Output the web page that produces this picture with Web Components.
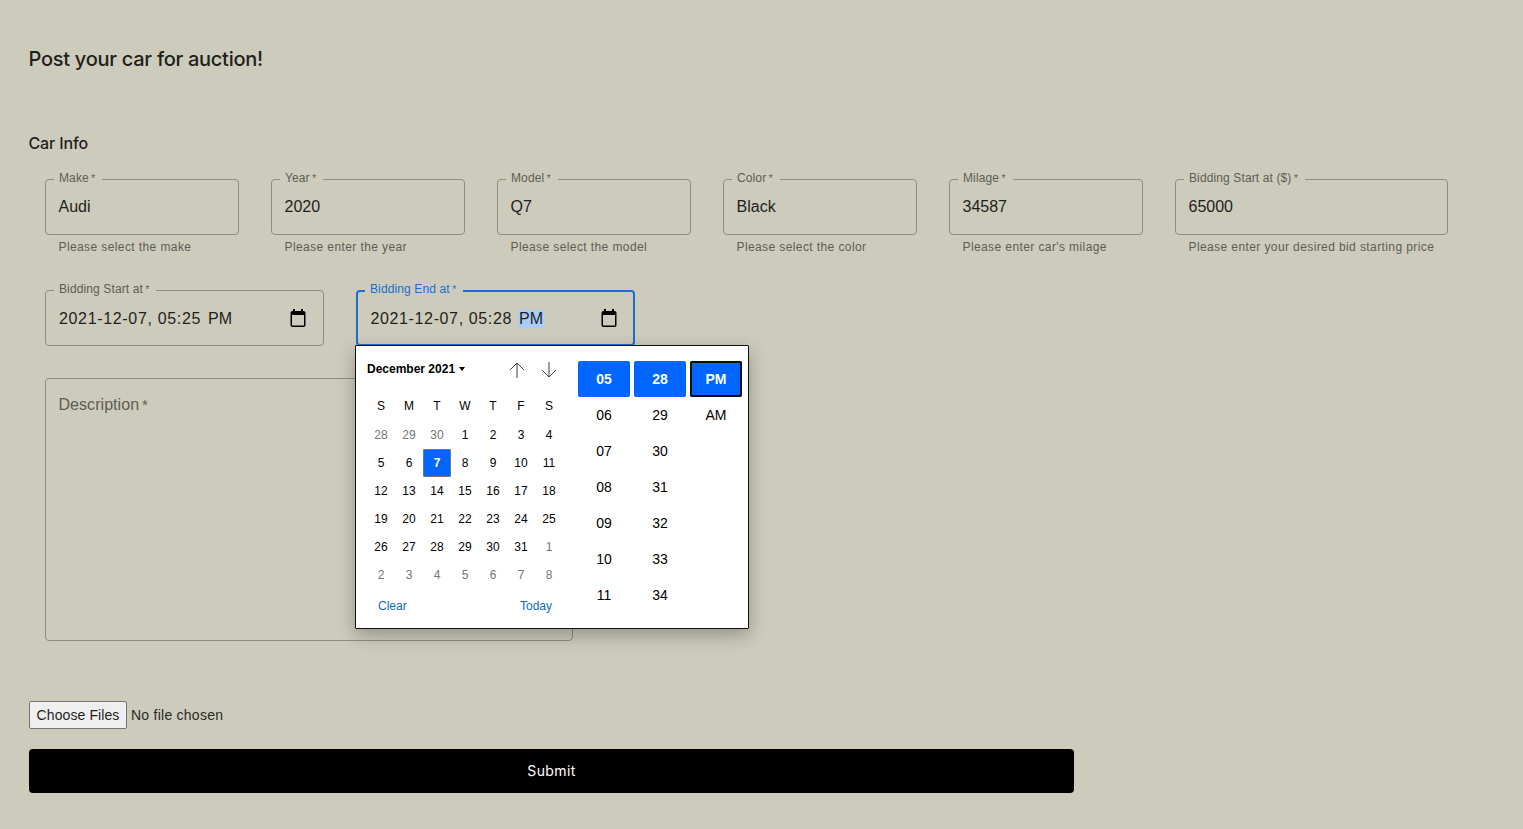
<!DOCTYPE html>
<html>
<head>
<meta charset="utf-8">
<title>Post your car</title>
<style>
  html, body { margin: 0; background: #cdcbbb; }
  body { font-family: "Liberation Sans", Arial, sans-serif; color: #1f1f1b; }
</style>
</head>
<body>
<auction-form>
  <span slot="title">Post your car for auction!</span>
  <span slot="section">Car Info</span>

  <car-field slot="row1" style="width:194px" label="Make" value="Audi" helper="Please select the make"></car-field>
  <car-field slot="row1" style="width:194px" label="Year" value="2020" helper="Please enter the year"></car-field>
  <car-field slot="row1" style="width:194px" label="Model" value="Q7" helper="Please select the model"></car-field>
  <car-field slot="row1" style="width:194px" label="Color" value="Black" helper="Please select the color"></car-field>
  <car-field slot="row1" style="width:194px" label="Milage" value="34587" helper="Please enter car's milage"></car-field>
  <car-field slot="row1" style="width:273px" label="Bidding Start at ($)" value="65000" helper="Please enter your desired bid starting price"></car-field>

  <date-field slot="row2" label="Bidding Start at" date="2021-12-07, 05:25" ampm="PM"></date-field>
  <date-field slot="row2" label="Bidding End at" date="2021-12-07, 05:28" ampm="PM" focused>
    <date-picker></date-picker>
  </date-field>

  <description-box slot="description" label="Description"></description-box>
  <file-chooser slot="file"></file-chooser>
  <submit-bar slot="submit">Submit</submit-bar>
</auction-form>

<script>
const outlineCss = `
    fieldset {
        margin: 0;
        padding: 0 12.5px;
        height: 64px;
        box-sizing: border-box;
        border: 1px solid #8f8e7e;
        border-radius: 4px;
        min-width: 0;
    }
    legend {
        margin-left: -4.5px;
        padding: 0 7px 2px 5px;
        font-size: 12px;
        line-height: 14px;
        letter-spacing: .12px;
        color: #5e5d53;
        white-space: nowrap;
    }
    legend i { font-style: normal; font-size: 10px; margin-left: 2.5px; }
`;

class AuctionForm extends HTMLElement {
    constructor() {
        super();
        this.attachShadow({ mode: 'open' });
        this.shadowRoot.innerHTML = `
            <style>
                :host { display: block; padding: 43px 29px 36px; }
                h1 { margin: 0 0 0 -.5px; font: 500 20px/32px Inter, sans-serif; letter-spacing: -.27px; }
                h2 { margin: 56px 0 16px -.5px; font: 500 16px/24px Inter, sans-serif; letter-spacing: -.13px; }
                .row { display: flex; gap: 32px; margin-left: 16px; }
                .row2 { margin-top: 25px; }
                .desc { margin: 32px 0 60px 16px; }
                .file { margin-bottom: 20px; }
            </style>
            <h1><slot name="title"></slot></h1>
            <h2><slot name="section"></slot></h2>
            <div class="row"><slot name="row1"></slot></div>
            <div class="row row2"><slot name="row2"></slot></div>
            <div class="desc"><slot name="description"></slot></div>
            <div class="file"><slot name="file"></slot></div>
            <slot name="submit"></slot>
        `;
    }
}

class CarField extends HTMLElement {
    constructor() {
        super();
        this.attachShadow({ mode: 'open' });
        this.shadowRoot.innerHTML = `
            <style>
                :host { display: block; }
                ${outlineCss}
                .value { font-size: 16px; line-height: 24px; margin-top: 7px; }
                .helper { margin: 2px 14px 0 13.5px; font-size: 12px; line-height: 20px; letter-spacing: .4px; color: #5e5d53; white-space: nowrap; }
            </style>
            <fieldset>
                <legend>${this.getAttribute('label')}<i>*</i></legend>
                <div class="value">${this.getAttribute('value')}</div>
            </fieldset>
            <div class="helper">${this.getAttribute('helper')}</div>
        `;
    }
}

class DateField extends HTMLElement {
    constructor() {
        super();
        this.attachShadow({ mode: 'open' });
        const focused = this.hasAttribute('focused');
        this.shadowRoot.innerHTML = `
            <style>
                :host { display: block; position: relative; width: 279px; }
                ${outlineCss}
                fieldset.on { border: 2px solid #1b6fd0; padding: 0 11.5px; }
                fieldset.on legend { color: #1b6fd0; }
                .value { display: flex; align-items: center; justify-content: space-between; margin-top: 8px; padding-left: .5px; height: 24px; font-size: 16px; color: #1f1f1b; }
                .on .value { padding-left: 1px; }
                .date { letter-spacing: .66px; }
                .on .date { letter-spacing: .63px; }
                .ampm { margin-left: 6px; padding: 0 1px; }
                .on .ampm { background: #aaccf8; }
                svg { display: block; margin: -2px 4.5px 0 0; }
                .text { display: flex; line-height: 18px; }
                ::slotted(date-picker) { position: absolute; top: 63px; left: -1px; z-index: 2; }
            </style>
            <fieldset class="${focused ? 'on' : ''}">
                <legend>${this.getAttribute('label')}<i>*</i></legend>
                <div class="value">
                    <span class="text"><span class="date">${this.getAttribute('date')}</span><span class="ampm">${this.getAttribute('ampm')}</span></span>
                    <svg width="16" height="18" viewBox="0 0 16 18">
                        <path fill="#000" d="M3 0h2v2h6V0h2v2h.5c1.100 0 2 .9 2 2v12c0 1.100-.9 2-2 2h-11c-1.100 0-2-.9-2-2V4c0-1.100.9-2 2-2H3zM2 6v10.500h12V6z"/>
                    </svg>
                </div>
            </fieldset>
            <slot></slot>
        `;
    }
}

class DatePicker extends HTMLElement {
    constructor() {
        super();
        this.attachShadow({ mode: 'open' });
        const names = ['S', 'M', 'T', 'W', 'T', 'F', 'S'];
        const days = [];
        [28, 29, 30].forEach(d => days.push([d, 'muted']));
        for (let d = 1; d <= 31; d++) days.push([d, d == 7 ? 'sel' : '']);
        for (let d = 1; d <= 8; d++) days.push([d, 'muted']);

        const hours = ['05', '06', '07', '08', '09', '10', '11'];
        const mins = ['28', '29', '30', '31', '32', '33', '34'];

        this.shadowRoot.innerHTML = `
            <style>
                :host { display: flex; box-sizing: border-box; width: 394px; height: 284px; padding: 15px 6px 0 11px; background: #fff; color: #000; border: 1px solid #111; border-radius: 1px; box-shadow: 0 6px 18px rgba(0,0,0,.28); font-family: "Liberation Sans", Arial, sans-serif; font-size: 12px; }
                .cal { width: 196px; }
                .head { display: flex; align-items: flex-start; height: 18px; line-height: 16px; }
                .month { font-weight: 700; }
                .caret { margin: 6px 0 0 4px; width: 0; height: 0; border: 3.5px solid transparent; border-top: 4px solid #000; border-bottom: 0; }
                .arrows { margin: -1px 4px 0 auto; display: flex; gap: 12px; }
                .arrows svg { display: block; }
                .grid { display: grid; grid-template-columns: repeat(7, 28px); grid-template-rows: 29px; grid-auto-rows: 28px; margin-top: 13px; text-align: center; line-height: 28px; }
                .muted { color: #757575; }
                .sel { background: #0066ff; color: #fff; font-weight: 700; border-radius: 2px; box-shadow: inset 0 0 0 1px #767676; }
                .foot { display: flex; justify-content: space-between; margin: 8px 11px 0; color: #0b6bcb; line-height: 18px; }
                .times { display: grid; grid-template-columns: repeat(3, 52px); grid-auto-rows: 36px; column-gap: 4px; margin: 0 0 0 15px; font-size: 14px; text-align: center; line-height: 36px; }
                .on { background: #0066ff; color: #fff; font-weight: 700; border-radius: 2px; }
                .focus { box-shadow: inset 0 0 0 2px #101010; }
            </style>
            <div class="cal">
                <div class="head">
                    <span class="month">December 2021</span><span class="caret"></span>
                    <span class="arrows">
                        <svg width="20" height="20" viewBox="0 0 20 20" fill="none"><path stroke="#808080" stroke-width="1.5" d="M10 18V4"/><path stroke="#444" d="M3 10l7-7 7 7"/></svg>
                        <svg width="20" height="20" viewBox="0 0 20 20" fill="none"><path stroke="#808080" stroke-width="1.5" d="M10 2v14"/><path stroke="#444" d="M3 10l7 7 7-7"/></svg>
                    </span>
                </div>
                <div class="grid">
                    ${names.map(n => `<span>${n}</span>`).join('')}
                    ${days.map(d => `<span class="${d[1]}">${d[0]}</span>`).join('')}
                </div>
                <div class="foot"><span>Clear</span><span>Today</span></div>
            </div>
            <div class="times">
                ${hours.map((h, i) => `<span class="${i == 0 ? 'on' : ''}">${h}</span><span class="${i == 0 ? 'on' : ''}">${mins[i]}</span><span class="${i == 0 ? 'on focus' : ''}">${i == 0 ? 'PM' : i == 1 ? 'AM' : ''}</span>`).join('')}
            </div>
        `;
    }
}

class DescriptionBox extends HTMLElement {
    constructor() {
        super();
        this.attachShadow({ mode: 'open' });
        this.shadowRoot.innerHTML = `
            <style>
                :host { display: block; box-sizing: border-box; width: 528px; height: 263px; padding: 14px 12.5px; border: 1px solid #8f8e7e; border-radius: 4px; color: #5e5d53; font-size: 16px; line-height: 24px; letter-spacing: .05px; }
                i { font-style: normal; font-size: 15px; margin-left: 3px; }
            </style>
            ${this.getAttribute('label')}<i>*</i>
        `;
    }
}

class FileChooser extends HTMLElement {
    constructor() {
        super();
        this.attachShadow({ mode: 'open' });
        this.shadowRoot.innerHTML = `
            <style>
                :host { display: flex; align-items: center; font-size: 14px; letter-spacing: .25px; color: #2a2a26; }
                button { box-sizing: border-box; width: 98px; height: 28px; padding: 0; margin-right: 4px; font: inherit; letter-spacing: .1px; color: #1f1f1b; background: #efefef; border: 1px solid #767676; border-radius: 2px; }
            </style>
            <button>Choose Files</button><span>No file chosen</span>
        `;
    }
}

class SubmitBar extends HTMLElement {
    constructor() {
        super();
        this.attachShadow({ mode: 'open' });
        this.shadowRoot.innerHTML = `
            <style>
                :host { display: flex; align-items: center; justify-content: center; box-sizing: border-box; width: 1045px; height: 44px; padding-bottom: 2px; background: #000; color: #fff; border-radius: 4px; font: 14px Inter, sans-serif; letter-spacing: .4px; }
            </style>
            <slot></slot>
        `;
    }
}

window.customElements.define('auction-form', AuctionForm);
window.customElements.define('car-field', CarField);
window.customElements.define('date-field', DateField);
window.customElements.define('date-picker', DatePicker);
window.customElements.define('description-box', DescriptionBox);
window.customElements.define('file-chooser', FileChooser);
window.customElements.define('submit-bar', SubmitBar);
</script>
</body>
</html>
